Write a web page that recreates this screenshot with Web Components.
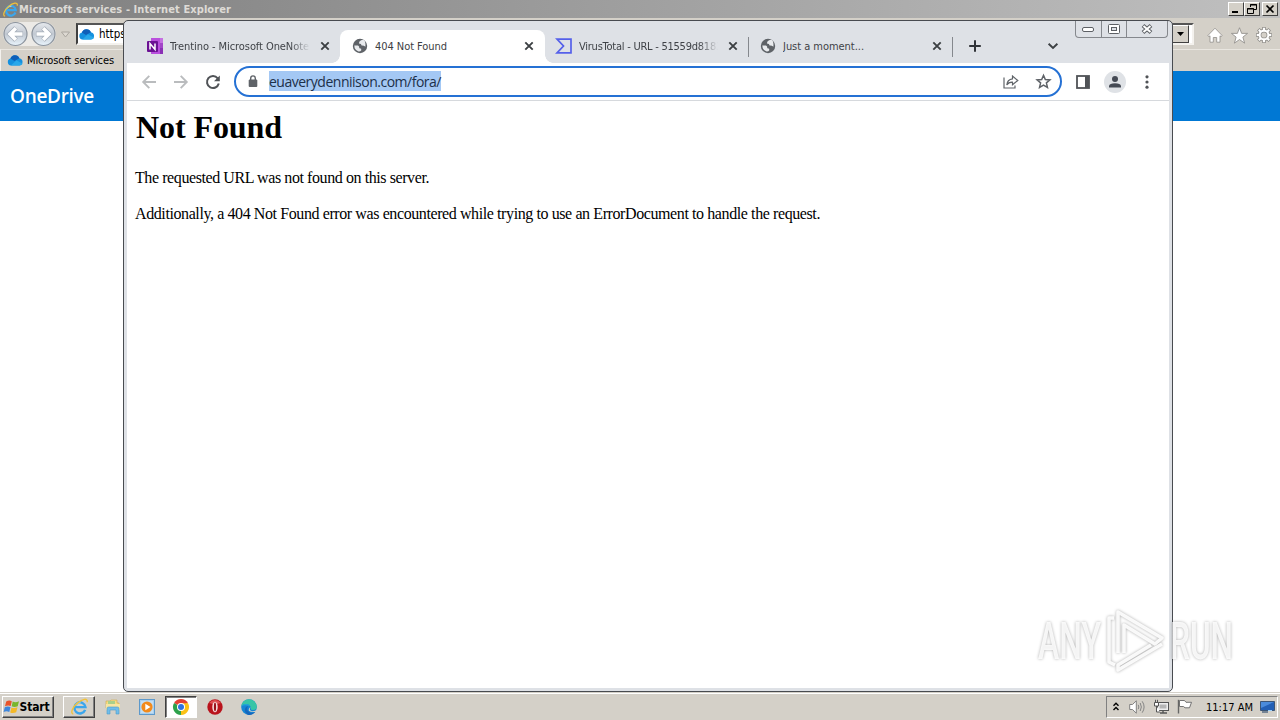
<!DOCTYPE html>
<html lang="en">
<head>
<meta charset="utf-8">
<title>Desktop</title>
<style>
  html, body { margin: 0; height: 100%; overflow: hidden; background: #fff; }
</style>
</head>
<body>
<desktop-screen></desktop-screen>

<script>
const UI = `"DejaVu Sans Condensed", "DejaVu Sans", sans-serif`;

const base = `
  *, :host { box-sizing: border-box; }
  svg { display: block; flex: none; overflow: visible; }
`;

const icons = {
  ie: `<svg viewBox="0 0 16 16"><path d="M13.300 11.200A5.200 5.200 0 1 1 13.600 8.600H4.500" fill="none" stroke="#3ba6ec" stroke-width="2.300"/><path d="M4.200 6.500Q6 4.300 9 4.500" fill="none" stroke="#a5defc" stroke-width="1"/><path d="M2.200 15.200C-1 14.500 1.500 8.500 6 4.800S15.800-.6 15.300 4" fill="none" stroke="#f2c23a" stroke-width="1.300"/></svg>`,
  cloud: `<svg viewBox="0 0 16 12"><path d="M3.800 11.500A3.600 3.600 0 0 1 3.400 4.500 4.800 4.800 0 0 1 12.400 4.200 3.700 3.700 0 0 1 12.500 11.500z" fill="#1490df"/><path d="M3.400 4.500A4.800 4.800 0 0 1 12.400 4.200L7.500 7z" fill="#0f5fb8"/><path d="M3.800 11.500L9.500 6.200 15.600 9.800Q14.800 11.500 12.500 11.500z" fill="#28a8ea"/></svg>`,
  onenote: `<svg viewBox="0 0 16 16"><path d="M4 0H16V16H4z" fill="#b94fdd"/><path d="M13 0H16V5H13z" fill="#c570e2"/><path d="M13 5H16V10H13z" fill="#a244c8"/><path d="M13 10H16V16H13z" fill="#8a2fb5"/><rect y="3" width="11" height="11" rx="1" fill="#6b1193"/><path d="M3 11.500V5.500L8 11.500V5.500" fill="none" stroke="#fff" stroke-width="1.500"/></svg>`,
  globe: `<svg viewBox="0 0 16 16"><circle cx="8" cy="8" r="7.200" fill="#5f6368"/><path d="M9 2.300Q6.500 3.800 7 5.500 9.500 5.500 9.600 7.400 12 7.200 13.400 8.800 14-.2 9 2.300M2.300 7.600H6Q7.500 8.200 7.300 10.200 9.800 10 9.300 12.300 8.500 13.700 6.700 13.600 2.300 12 2.300 7.600" fill="#e9ebee"/></svg>`,
  virustotal: `<svg viewBox="0 0 16 16"><path d="M1 1.200H15V14.800H1L7.500 8z" fill="none" stroke="#5560ea" stroke-width="1.700"/></svg>`,
  close: `<svg viewBox="0 0 10 10"><path d="M1.300 1.300L8.700 8.700M8.700 1.300L1.300 8.700" stroke="#3c4043" stroke-width="1.900"/></svg>`,
  plus: `<svg viewBox="0 0 12 12"><path d="M6 .2V11.800M.2 6H11.800" stroke="#303338" stroke-width="2"/></svg>`,
  chevron: `<svg viewBox="0 0 10 6"><path d="M.6.800L5 5 9.400.8" fill="none" stroke="#3c4043" stroke-width="1.900"/></svg>`,
  back: `<svg viewBox="0 0 14 14"><path d="M14 7H1.500M7.300.8L1.200 7 7.300 13.200" fill="none" stroke="#babcbe" stroke-width="1.900"/></svg>`,
  forward: `<svg viewBox="0 0 14 14"><path d="M0 7H12.500M6.700.8L12.800 7 6.700 13.200" fill="none" stroke="#babcbe" stroke-width="1.900"/></svg>`,
  reload: `<svg viewBox="0 0 14 14"><path d="M11.700 3.300A6 6 0 1 0 12.800 8.600" fill="none" stroke="#505357" stroke-width="2"/><path d="M13.800.4V6.200H8z" fill="#505357"/></svg>`,
  lock: `<svg viewBox="0 0 10 13"><rect x=".7" y="4.500" width="8.600" height="7.500" rx="1" fill="#5f6368"/><path d="M2.700 5V3.200A2.300 2.300 0 0 1 7.300 3.200V5" fill="none" stroke="#5f6368" stroke-width="1.400"/></svg>`,
  share: `<svg viewBox="0 0 16 14"><path d="M1 2.500V13H12V10.500M9.500 3.800V1L14.800 5.500 9.500 9.800V7.200Q5.600 7 3.800 10 4.200 4.400 9.500 3.800z" fill="none" stroke="#5f6368" stroke-width="1.200"/></svg>`,
  star: `<svg viewBox="0 0 14 14"><path d="M7 1.200L8.700 5.100 13 5.500 9.700 8.300 10.700 12.500 7 10.300 3.300 12.500 4.300 8.300 1 5.500 5.300 5.100z" fill="none" stroke="#5f6368" stroke-width="1.400"/></svg>`,
  panel: `<svg viewBox="0 0 14 14"><rect x="1" y="1" width="12" height="12" fill="#fff" stroke="#505357" stroke-width="1.800"/><rect x="9" y="1" width="4" height="12" fill="#505357"/></svg>`,
  avatar: `<svg viewBox="0 0 22 22"><circle cx="11" cy="11" r="11" fill="#dfe2e6"/><circle cx="11" cy="8" r="3" fill="#454a54"/><path d="M5 16.500V15Q5.500 12.200 11 12.200T17 15V16.500z" fill="#454a54"/></svg>`,
  dots: `<svg viewBox="0 0 4 14"><g fill="#505357"><circle cx="2" cy="1.800" r="1.600"/><circle cx="2" cy="7" r="1.600"/><circle cx="2" cy="12.200" r="1.600"/></g></svg>`,
  home: `<svg viewBox="0 0 16 16"><path d="M.8 8.600L8 1.200 15.200 8.600 14 9.600 13 8.800V15.200H9.700V10.500H6.300V15.200H3V8.800L2 9.600z" fill="#fff" stroke="#8f8d89" stroke-width=".8"/></svg>`,
  favstar: `<svg viewBox="0 0 16 16"><path d="M8 .7L10 6H15.600L11.200 9.500 12.800 15.200 8 11.800 3.200 15.200 4.800 9.500.4 6H6z" fill="#fff" stroke="#8f8d89" stroke-width=".8"/></svg>`,
  gear: `<svg viewBox="0 0 16 16"><g fill="none"><g stroke="#8f8d89" stroke-width="3.600"><path d="M8 0V4M8 12V16M0 8H4M12 8H16M2.300 2.300L5 5M11 11L13.700 13.700M2.300 13.700L5 11M11 5L13.700 2.300"/><circle cx="8" cy="8" r="4.400"/></g><g stroke="#fff" stroke-width="2.100"><path d="M8 .7V4M8 12V15.300M.7 8H4M12 8H15.300M2.800 2.800L5 5M11 11L13.200 13.200M2.800 13.200L5 11M11 5L13.200 2.800"/><circle cx="8" cy="8" r="4.400"/></g></g></svg>`,
  windows: `<svg viewBox="0 0 16 16"><path d="M2.200 2.600Q5 .8 7.800 2.200L6.700 7Q4 5.800 1 7.300z" fill="#e8542b"/><path d="M8.700 2.600Q11.500 4 15 2.300L13.700 7.200Q10.500 8.600 7.700 7.300z" fill="#79b62b"/><path d="M.8 8.200Q3.800 6.800 6.500 8.100L5.300 13Q2.500 11.700-.4 13z" fill="#3d86dc"/><path d="M7.500 8.500Q10.300 9.800 13.500 8.300L12.200 13.200Q9 14.700 6.200 13.400z" fill="#f4b928"/></svg>`,
  folder: `<svg viewBox="0 0 16 16"><path d="M1 2H5L6 1H12V4H14V9H1z" fill="#f7dc83" stroke="#cfaa4c" stroke-width=".6"/><path d="M3 2H10V6H3z" fill="#a9d08a"/><path d="M1 5H15V11H1z" fill="#f6e5a2"/><path d="M2 15V9.500Q2 8 3.500 8H12.500Q14 8 14 9.500V15H11V11H5V15z" fill="#70bdea" stroke="#4a9cc9" stroke-width=".6"/></svg>`,
  player: `<svg viewBox="0 0 16 16"><rect x=".5" y=".5" width="15" height="15" fill="#a9d0ef" stroke="#5d99cb"/><rect x="2" y="2" width="12" height="12" fill="#c3def3"/><circle cx="8" cy="8" r="5.600" fill="#f28a1b"/><path d="M6.300 4.800L11.500 8 6.300 11.200z" fill="#fff"/></svg>`,
  chrome: `<svg viewBox="0 0 16 16"><path d="M8 8L1.070 4A8 8 0 0 1 14.930 4z" fill="#e34133"/><path d="M8 8L14.930 4A8 8 0 0 1 8 16z" fill="#fbc116"/><path d="M8 8V16A8 8 0 0 1 1.070 4z" fill="#2da14b"/><path d="M8 4.200H15L11.400 10 8 16 11 10z" fill="#fbc116"/><circle cx="8" cy="8" r="4" fill="#fff"/><circle cx="8" cy="8" r="3" fill="#2f73e0"/></svg>`,
  opera: `<svg viewBox="0 0 16 16"><circle cx="8" cy="8" r="7.700" fill="#b9131c"/><path d="M2 4Q8-2 14 4 8 6 2 4" fill="#df5054"/><ellipse cx="8" cy="8" rx="2.700" ry="5.200" fill="#f7dfdf"/><ellipse cx="8" cy="8" rx="1.100" ry="4.400" fill="#98101a"/></svg>`,
  edge: `<svg viewBox="0 0 16 16"><circle cx="8" cy="8" r="7.800" fill="#1686d4"/><path d="M.3 7A7.800 7.800 0 0 1 15.800 7.500Q16 11 12 11 9 11 9.800 8.500 9 5 5 5 2 5 .3 7" fill="#38c5a7"/><path d="M.3 7Q2 5 5 5 8.500 5 9 7 4 5.500.3 7" fill="#25a9d8"/><path d="M7 7Q4.600 11.500 9 13.500 12 14.800 14.500 12.500A7.800 7.800 0 0 1 6.500 15.700Q2 12 5 8z" fill="#1667bd"/><path d="M9.500 8Q7.500 11.500 11 12.200 13.500 12.500 15.300 11 16.500 11.800 15 12.700 10 13.500 8.200 12 6.800 10 9.500 8" fill="#d4d0c8"/></svg>`,
  upchev: `<svg viewBox="0 0 6 9"><path d="M.5 3.800L3 1.300 5.500 3.800M.5 8L3 5.500 5.500 8" fill="none" stroke="#000" stroke-width="1.400"/></svg>`,
  speaker: `<svg viewBox="0 0 16 14"><path d="M.7 4.500H3.500L7.300.8V13.200L3.500 9.500H.7z" fill="#fff" stroke="#777" stroke-width=".9"/><path d="M9.200 4.800Q10.500 7 9.200 9.200M11.200 3Q13.500 7 11.200 11M13.200 1.300Q17 7 13.200 12.700" fill="none" stroke="#858585"/></svg>`,
  network: `<svg viewBox="0 0 16 15"><rect x="4.500" y="3.500" width="11" height="8" fill="#eee" stroke="#555"/><rect x="6.500" y="5.500" width="7" height="4" fill="#b5b5b5"/><path d="M7 14H14M10 11.500V14" stroke="#555" stroke-width="1.400"/><path d="M1.500 3.500H5.500V7H1.500zM2.500 3V.8M4.500 3V.8M3.500 7V13H7" fill="#fff" stroke="#555"/></svg>`,
  flag: `<svg viewBox="0 0 16 15"><path d="M1.500.8V14.500" stroke="#666" stroke-width="1.400"/><path d="M2.500 1.500H7.500L9 3.300H14.500L12.500 8.800H8L6.500 7.500H2.500z" fill="#fff" stroke="#666" stroke-width=".9"/></svg>`,
  monitor: `<svg viewBox="0 0 15 12"><path d="M.5.500H14.500V9.500H.5z" fill="#225fb5" stroke="#3c5575"/><path d="M1 1H14L1 7z" fill="#4a8bdb"/><path d="M2 11H8" stroke="#566b83" stroke-width="1.500"/><path d="M8 9.500H12" stroke="#9bd2ff"/></svg>`
};

// <ui-icon name="star" w="14" h="14">
class UiIcon extends HTMLElement {
  constructor() {
    super();
    this.attachShadow({ mode: "open" });
  }
  connectedCallback() {
    const w = this.getAttribute("w") || 16;
    const h = this.getAttribute("h") || w;
    this.shadowRoot.innerHTML = `
      <style>${base}
        :host { display: block; flex: none; width: ${w}px; height: ${h}px; }
        svg { width: 100%; height: 100%; }
      </style>${icons[this.getAttribute("name")]}`;
  }
}
customElements.define("ui-icon", UiIcon);

// Single line of text, tracked so that it takes exactly the width in "w"
class FitText extends HTMLElement {
  constructor() {
    super();
    this.attachShadow({ mode: "open" });
    this.shadowRoot.innerHTML = `
      <style>
        :host { display: block; flex: none; }
        span { display: block; width: max-content; white-space: nowrap; }
      </style><span><slot></slot></span>`;
  }
  connectedCallback() {
    const span = this.shadowRoot.querySelector("span");
    const want = Number(this.getAttribute("w"));
    const n = this.textContent.length;
    const have = span.getBoundingClientRect().width;
    if (want && have) span.style.letterSpacing = (want - have) / n + "px";
  }
}
customElements.define("fit-text", FitText);

class IeWindow extends HTMLElement {
  constructor() {
    super();
    this.attachShadow({ mode: "open" });
  }
  connectedCallback() {
    this.shadowRoot.innerHTML = `
      <style>${base}
        :host { display: flex; flex-direction: column; flex: 1; background: #fff; font: 11px ${UI}; }
        .title {
          display: flex; align-items: center; height: 18px; padding: 0 2px 0 3px; gap: 1px;
          background: linear-gradient(90deg, #7f7f7f, #c0c0c0); color: #dedbd6;
          font: bold 11px ${UI};
        }
        .buttons { display: flex; margin-left: auto; }
        .buttons i {
          display: flex; justify-content: center; width: 16px; height: 14px;
          background: #d4d0c8; border: 1px solid; border-color: #fff #404040 #404040 #fff;
        }
        .buttons i:last-child { margin-left: 2px; }
        .nav { display: flex; align-items: center; height: 31px; padding: 0 8px 0 3px; background: #d4d0c8; }
        .address {
          display: flex; align-items: center; gap: 4px; width: 1118px; height: 22px; margin-left: 4px;
          background: #fff; border: 2px solid; border-color: #555 #f4f2ee #f4f2ee #404040; font-size: 11.500px;
        }
        .drop {
          display: flex; align-items: center; justify-content: center; width: 17px; height: 18px; margin: 0 3px 0 auto;
          background: #d4d0c8; border: 1px solid; border-color: #fff #404040 #404040 #fff;
        }
        .tools { display: flex; gap: 8px; margin: 3px 0 0 auto; }
        .favs {
          display: flex; align-items: center; gap: 4px; height: 22px; padding: 0 0 1px 6px;
          background: #d4d0c8; border-top: 1px solid #e9e6e0; border-left: 1px solid #f4f2ee;
        }
        header {
          display: flex; align-items: center; height: 50px; padding-left: 10px;
          background: #0078d4; color: #fff; font: 600 19px "Open Sans", sans-serif;
        }
      </style>
      <div class="title">
        <ui-icon name="ie" w="15"></ui-icon>
        <fit-text w="212">Microsoft services - Internet Explorer</fit-text>
        <div class="buttons">
          <i><svg width="14" height="12"><path d="M3 9H9" stroke="#000" stroke-width="2"/></svg></i>
          <i><svg width="14" height="12"><path d="M5.500 4V1.500H11.500V6.500H9M5 2H12M2.500 5.500H8.500V10.500H2.500zM2 6H9" fill="none" stroke="#000"/></svg></i>
          <i><svg width="14" height="12"><path d="M3.500 2.500L10.500 9.500M10.500 2.500L3.500 9.500" stroke="#000" stroke-width="1.700"/></svg></i>
        </div>
      </div>
      <div class="nav">
        <svg width="69" height="28" viewBox="0 0 69 28">
          <defs><linearGradient id="g" x2="0" y2="1"><stop stop-color="#e6e9ed"/><stop offset=".5" stop-color="#c2c9d2"/><stop offset="1" stop-color="#e9f4fc"/></linearGradient></defs>
          <rect x="0" y="2" width="53" height="24" rx="12" fill="#eceae6"/>
          <g fill="url(#g)" stroke="#8b939d" stroke-width="1.200"><circle cx="12.500" cy="14" r="11.500"/><circle cx="40.500" cy="14" r="11.500"/></g>
          <g fill="none" stroke="#a3acb7" stroke-width="5"><path d="M20 14H7M13 8L7 14 13 20"/><path d="M33 14H46M40 8L46 14 40 20"/></g>
          <g fill="none" stroke="#fff" stroke-width="3.600"><path d="M19.500 14H7.500M12.800 8.300L7 14 12.800 19.700"/><path d="M33.500 14H45.500M40.200 8.300L46 14 40.200 19.700"/></g>
          <path d="M58.500 12H66.500L62.500 17z" fill="#ddd9d2" stroke="#aaa69f"/>
        </svg>
        <div class="address">
          <ui-icon name="cloud" w="17" h="12"></ui-icon><span>https:</span>
          <div class="drop"><svg width="7" height="4"><path d="M0 0H7L3.500 4z"/></svg></div>
        </div>
        <div class="tools">
          <ui-icon name="home" w="16"></ui-icon>
          <ui-icon name="favstar" w="17"></ui-icon>
          <ui-icon name="gear" w="16"></ui-icon>
        </div>
      </div>
      <div class="favs">
        <ui-icon name="cloud" w="16" h="12"></ui-icon><fit-text w="87">Microsoft services</fit-text>
      </div>
      <header><fit-text w="84">OneDrive</fit-text></header>`;
  }
}
customElements.define("ie-window", IeWindow);

class ChromeTab extends HTMLElement {
  constructor() {
    super();
    this.attachShadow({ mode: "open" });
  }
  connectedCallback() {
    const long = this.hasAttribute("fade");
    this.shadowRoot.innerHTML = `
      <style>${base}
        :host {
          position: relative; display: flex; align-items: center; flex: none; width: 205px; margin-right: -1px;
          height: 33px; padding: 0 11px 1px 12px; color: #3f4247; font: 11px ${UI};
        }
        :host([active]) { background: #fff; border-radius: 8px 8px 0 0; color: #3c4043; z-index: 1; }
        :host([active])::before, :host([active])::after {
          content: ""; position: absolute; bottom: 0; width: 8px; height: 8px;
        }
        :host([active])::before { left: -8px; background: radial-gradient(circle at 0 0, transparent 7.500px, #fff 8px); }
        :host([active])::after { right: -8px; background: radial-gradient(circle at 100% 0, transparent 7.500px, #fff 8px); }
        :host([divider]) { border-right: 1px solid #85888d; height: 20px; margin-bottom: 6px; padding: 0 10px 2px 12px; }
        .text {
          flex: 1; margin: 0 10px 0 7px; overflow: hidden;
          ${long ? "-webkit-mask-image: linear-gradient(90deg, #000 86%, transparent); mask-image: linear-gradient(90deg, #000 86%, transparent);" : ""}
        }
      </style>
      <ui-icon name="${this.getAttribute("icon")}" w="16"></ui-icon>
      <div class="text"><slot></slot></div>
      <ui-icon name="close" w="10"></ui-icon>`;
  }
}
customElements.define("chrome-tab", ChromeTab);

class ChromeWindow extends HTMLElement {
  constructor() {
    super();
    this.attachShadow({ mode: "open" });
  }
  connectedCallback() {
    this.shadowRoot.innerHTML = `
      <style>${base}
        :host {
          display: flex; flex-direction: column; border: 1px solid #484b50; border-radius: 5px;
          background: #dee1e6; padding: 0 3px 3px; overflow: hidden;
        }
        .strip { display: flex; align-items: flex-end; height: 42px; padding-left: 9px; }
        .strip chrome-tab:first-child { padding-left: 11px; }
        .new { margin: 0 0 11px 17px; }
        .menu { margin: 0 0 14px 67px; }
        .caption {
          display: flex; align-self: flex-start; width: 93px; height: 17px; margin: 0 1px 0 auto;
          border: 1px solid #85888d; border-top: 0; border-radius: 0 0 4px 4px;
        }
        .caption span { display: flex; align-items: center; justify-content: center; width: 25px; }
        .caption span + span { border-left: 1px solid #85888d; }
        .caption span:last-child { flex: 1; }
        .toolbar {
          display: flex; align-items: center; height: 38px; padding: 0 20px 0 15px;
          background: #fff; border-bottom: 1px solid #d6d9dd;
        }
        .nav { display: flex; gap: 18px; }
        .omnibox {
          display: flex; align-items: center; width: 828px; height: 31px; margin-left: 14px; padding: 0 9px 0 12px;
          border: 2px solid #2571d4; border-radius: 16px; color: #1c3049; font: 14px "Open Sans", "DejaVu Sans", sans-serif;
        }
        .url { margin: 0 0 1px 11px; background: #a4c8f4; height: 20px; line-height: 21px; }
        .omnibox .end { display: flex; align-items: center; gap: 17px; margin-left: auto; }
        .right { display: flex; align-items: center; margin-left: 14px; }
        .page { flex: 1; background: #fff; padding: 8px; color: #000; font: 16px "Liberation Serif", serif; }
        h1 { margin: 0; font-size: 32px; line-height: 37px; padding-left: 1px; }
        p { margin: 0 0 18px; line-height: 18px; }
        h1 + p { margin-top: 23px; }
      </style>
      <div class="strip">
        <chrome-tab icon="onenote" fade><fit-text w="139">Trentino - Microsoft OneNote</fit-text></chrome-tab>
        <chrome-tab icon="globe" active><fit-text w="72">404 Not Found</fit-text></chrome-tab>
        <chrome-tab icon="virustotal" fade><fit-text w="143">VirusTotal - URL - 51559d8183</fit-text></chrome-tab>
        <chrome-tab icon="globe"><fit-text w="81">Just a moment...</fit-text></chrome-tab>
        <ui-icon class="new" name="plus" w="12"></ui-icon>
        <ui-icon class="menu" name="chevron" w="10" h="6"></ui-icon>
        <div class="caption">
          <span><svg width="13" height="5"><rect x=".5" y=".5" width="11" height="4" rx="1.500" fill="#fff" stroke="#5d6065"/></svg></span>
          <span><svg width="12" height="10"><rect x=".5" y=".5" width="11" height="9" rx="1" fill="#fff" stroke="#5d6065"/><rect x="3.500" y="3.500" width="5" height="3" fill="#dee1e6" stroke="#5d6065"/></svg></span>
          <span><svg width="12" height="10"><path d="M2 1.500L10 8.500M10 1.500L2 8.500" stroke="#5d6065" stroke-width="4"/><path d="M2.500 2L9.500 8M9.500 2L2.500 8" stroke="#fff" stroke-width="2"/></svg></span>
        </div>
      </div>
      <div class="toolbar">
        <div class="nav">
          <ui-icon name="back" w="14"></ui-icon>
          <ui-icon name="forward" w="14"></ui-icon>
          <ui-icon name="reload" w="14"></ui-icon>
        </div>
        <div class="omnibox">
          <ui-icon name="lock" w="10" h="13"></ui-icon>
          <fit-text class="url" w="172">euaverydenniison.com/fora/</fit-text>
          <div class="end">
            <ui-icon name="share" w="16" h="14"></ui-icon>
            <ui-icon name="star" w="15"></ui-icon>
          </div>
        </div>
        <div class="right">
          <ui-icon name="panel" w="14"></ui-icon>
          <ui-icon name="avatar" w="22" style="margin:0 19px 0 14px"></ui-icon>
          <ui-icon name="dots" w="4" h="14"></ui-icon>
        </div>
      </div>
      <div class="page">
        <h1><fit-text w="146">Not Found</fit-text></h1>
        <p><fit-text w="294">The requested URL was not found on this server.</fit-text></p>
        <p><fit-text w="685">Additionally, a 404 Not Found error was encountered while trying to use an ErrorDocument to handle the request.</fit-text></p>
      </div>`;
    // thin dividers between the inactive tabs on the right
    const tabs = this.shadowRoot.querySelectorAll("chrome-tab");
    tabs[2].setAttribute("divider", "");
    tabs[3].setAttribute("divider", "");
  }
}
customElements.define("chrome-window", ChromeWindow);

class TaskBar extends HTMLElement {
  constructor() {
    super();
    this.attachShadow({ mode: "open" });
  }
  connectedCallback() {
    this.shadowRoot.innerHTML = `
      <style>${base}
        :host {
          display: flex; align-items: center; flex: none; height: 28px; padding: 1px 2px 1px;
          background: #d4d0c8; border-top: 1px solid #d4d0c8; box-shadow: inset 0 1px #fff; font: 11px ${UI}; color: #000;
        }
        .btn {
          display: flex; align-items: center; justify-content: center; height: 22px;
          border: 1px solid; border-color: #fff #404040 #404040 #fff; box-shadow: inset -1px -1px #808080;
        }
        .start { width: 52px; padding-right: 3px; font: bold 12px ${UI}; }
        .ie { width: 32px; margin: 0 10px 0 9px; }
        .on { width: 32px; margin: 0 10px; background: #fff; border-color: #404040 #fff #fff #404040; box-shadow: inset 1px 1px #808080; }
        .tray {
          display: flex; align-items: center; height: 22px; width: 172px; margin-left: auto; padding: 0 1px 0 6px;
          border: 1px solid; border-color: #808080 #fff #fff #808080;
        }
      </style>
      <div class="btn start"><ui-icon name="windows" w="16"></ui-icon><fit-text w="30">Start</fit-text></div>
      <div class="btn ie"><ui-icon name="ie" w="17"></ui-icon></div>
      <ui-icon name="folder" w="16"></ui-icon>
      <ui-icon name="player" w="16" style="margin-left:18px"></ui-icon>
      <div class="btn on"><ui-icon name="chrome" w="16"></ui-icon></div>
      <ui-icon name="opera" w="16"></ui-icon>
      <ui-icon name="edge" w="16" style="margin-left:18px"></ui-icon>
      <div class="tray">
        <ui-icon name="upchev" w="6" h="9"></ui-icon>
        <ui-icon name="speaker" w="16" h="14" style="margin-left:10px"></ui-icon>
        <ui-icon name="network" w="16" h="15" style="margin-left:8px"></ui-icon>
        <ui-icon name="flag" w="16" h="15" style="margin-left:8px"></ui-icon>
        <fit-text w="47" style="margin:1px 7px 0 13px">11:17 AM</fit-text>
        <ui-icon name="monitor" w="15" h="12"></ui-icon>
      </div>`;
  }
}
customElements.define("task-bar", TaskBar);

class WaterMark extends HTMLElement {
  constructor() {
    super();
    this.attachShadow({ mode: "open" });
    this.shadowRoot.innerHTML = `
      <style>
        :host { display: block; width: 200px; height: 70px; }
        svg { display: block; overflow: visible; filter: drop-shadow(0 0 1.500px rgba(0,0,0,.36)); }
        text { font: 500 51px Roboto, sans-serif; fill: #fff; fill-opacity: .85; }
      </style>
      <svg width="200" height="70" viewBox="0 0 200 70">
        <text x="3" y="54" textLength="63" lengthAdjust="spacingAndGlyphs">ANY</text>
        <text x="135" y="54" textLength="63" lengthAdjust="spacingAndGlyphs">RUN</text>
        <g fill="none" stroke="#fff" stroke-opacity=".9" stroke-width="3.500" stroke-linejoin="round">
          <path d="M83 48V7L127 33 120 39 89 20V48"/>
          <path d="M79 13H74V57L80 60M127 39L83 65V60L116 40"/>
        </g>
      </svg>`;
  }
}
customElements.define("water-mark", WaterMark);

class DesktopScreen extends HTMLElement {
  constructor() {
    super();
    this.attachShadow({ mode: "open" });
  }
  connectedCallback() {
    this.shadowRoot.innerHTML = `
      <style>
        :host { position: relative; display: flex; flex-direction: column; width: 1280px; height: 720px; overflow: hidden; }
        chrome-window { position: absolute; left: 123px; top: 20px; width: 1050px; height: 672px; }
        water-mark { position: absolute; left: 1035px; top: 605px; }
      </style>
      <ie-window></ie-window>
      <task-bar></task-bar>
      <chrome-window></chrome-window>
      <water-mark></water-mark>`;
  }
}
customElements.define("desktop-screen", DesktopScreen);
</script>
</body>
</html>
